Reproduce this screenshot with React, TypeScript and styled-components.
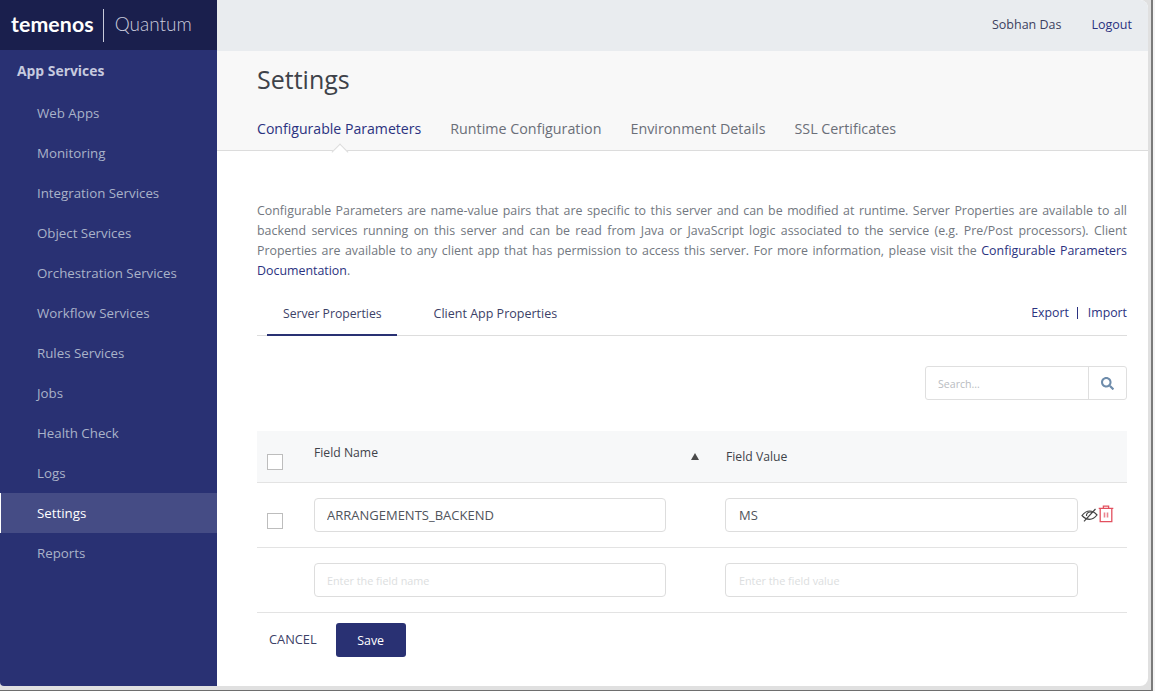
import React from "react";
import styled, { createGlobalStyle } from "styled-components";
import { FaSearch } from "react-icons/fa";

const Global = createGlobalStyle`
  html, body { margin: 0; padding: 0; background: #fff; }
  body { font-family: "Open Sans", "Noto Sans", sans-serif; overflow: hidden; }
  * { box-sizing: border-box; }
`;

const Screen = styled.div`
  width: 1155px;
  height: 691px;
  background: #f4f4f4;
  overflow: hidden;
`;
const Frame = styled.div`
  width: 1153px;
  height: 691px;
  border-right: 2px solid #7a7a7a;
  border-bottom: 1px solid #6e6e6e;
  background: #e0e0e0;
`;
const Window = styled.div`
  width: 1148px;
  height: 686px;
  display: flex;
  background: #fff;
  border-top-right-radius: 8px;
  border-bottom-right-radius: 8px;
  border-bottom-left-radius: 4px;
  overflow: hidden;
`;
const Sidebar = styled.aside`
  width: 217px;
  flex: none;
  background: #293173;
  display: flex;
  flex-direction: column;
`;
const Brand = styled.div`
  height: 50px;
  background: #1a1f4d;
  display: flex;
  align-items: center;
  padding-left: 11px;
  color: #fff;
`;
const BrandName = styled.span`
  font-family: "Lato", sans-serif;
  font-weight: 700;
  font-size: 21.3px;
  letter-spacing: 0.1px;
  margin-bottom: 3px;
`;
const BrandRule = styled.span`
  width: 1px;
  height: 33px;
  margin: 0 11px 0 9px;
  background: #c8cada;
`;
const BrandProduct = styled.span`
  font-family: "Lato", sans-serif;
  font-weight: 300;
  font-size: 19px;
  margin-bottom: 3px;
  color: #c9cbdc;
`;
const SectionTitle = styled.div`
  height: 43px;
  padding: 0 0 2px 17px;
  display: flex;
  align-items: center;
  font-size: 13.9px;
  font-weight: 700;
  color: #c6cadf;
`;
const NavList = styled.nav`
  display: flex;
  flex-direction: column;
`;
const NavItem = styled.a<{ $active?: boolean }>`
  height: 40px;
  display: flex;
  align-items: center;
  padding: 0 0 0 ${(p) => (p.$active ? "36px" : "37px")};
  font-size: 13.3px;
  color: ${(p) => (p.$active ? "#ffffff" : "#a9b3c9")};
  background: ${(p) => (p.$active ? "#454c85" : "transparent")};
  border-left: ${(p) => (p.$active ? "1px solid #fff" : "none")};
`;
const Main = styled.main`
  flex: 1;
  min-width: 0;
  display: flex;
  flex-direction: column;
`;
const TopBar = styled.header`
  height: 51px;
  background: #e9ecef;
  display: flex;
  align-items: center;
  justify-content: flex-end;
  padding: 0 16px 3px 0;
  gap: 30px;
  font-size: 12.5px;
`;
const UserName = styled.span`
  color: #3c3f5e;
`;
const LogoutLink = styled.a`
  color: #2b3280;
`;
const PageHead = styled.section`
  height: 100px;
  background: #f8f8f8;
  border-bottom: 1px solid #dcdcdc;
  padding: 12px 0 0 40px;
`;
const PageTitle = styled.h1`
  margin: 0;
  font-size: 25px;
  font-weight: 400;
  line-height: 32px;
  color: #3e4249;
`;
const TabRow = styled.div`
  display: flex;
  gap: 29px;
  margin-top: 24px;
`;
const PageTab = styled.a<{ $active?: boolean }>`
  position: relative;
  font-size: ${(p) => (p.$active ? "14.1px" : "14.3px")};
  line-height: 20px;
  color: ${(p) => (p.$active ? "#2b3280" : "#6b6f78")};
`;
const Notch = styled.span`
  position: absolute;
  left: 50%;
  top: 27px;
  width: 12px;
  height: 12px;
  margin-left: -5px;
  background: #fff;
  border-left: 1px solid #dcdcdc;
  border-top: 1px solid #dcdcdc;
  transform: rotate(45deg);
`;
const Body = styled.section`
  flex: 1;
  padding: 50px 21px 0 40px;
`;
const Intro = styled.p`
  margin: 0;
  font-size: 12.4px;
  line-height: 20px;
  text-align: justify;
  color: #727780;
`;
const DocLink = styled.a`
  color: #2b3280;
`;
const SubTabBar = styled.div`
  height: 46px;
  margin-top: 9px;
  display: flex;
  align-items: stretch;
  justify-content: space-between;
  border-bottom: 1px solid #dddddd;
`;
const SubTabs = styled.div`
  display: flex;
  margin-left: 10px;
  gap: 7px;
`;
const SubTab = styled.a<{ $active?: boolean }>`
  padding: 2px ${(p) => (p.$active ? "15px" : "30px")} 0 ${(p) => (p.$active ? "16px" : "30px")};
  display: flex;
  align-items: center;
  font-size: ${(p) => (p.$active ? "12.2px" : "12.5px")};
  color: #3c4167;
  border-bottom: 2px solid ${(p) => (p.$active ? "#293173" : "transparent")};
  margin-bottom: -1px;
`;
const Transfer = styled.div`
  display: flex;
  align-items: center;
  font-size: 12.3px;
  color: #2b3280;
`;
const TransferRule = styled.span`
  width: 1px;
  height: 12px;
  margin: 0 10px 0 8px;
  background: #2b3280;
`;
const SearchRow = styled.div`
  display: flex;
  justify-content: flex-end;
  margin-top: 30px;
`;
const SearchBox = styled.div`
  width: 202px;
  height: 34px;
  display: flex;
  border: 1px solid #dfdfdf;
  border-radius: 3px;
  background: #fff;
`;
const SearchInput = styled.input`
  width: 162px;
  border: none;
  outline: none;
  background: transparent;
  padding: 2px 12px 0;
  font: 400 10.6px "Open Sans", sans-serif;
  &::placeholder { color: #b9bcc1; opacity: 1; }
`;
const SearchButton = styled.button`
  flex: 1;
  border: none;
  border-left: 1px solid #dfdfdf;
  background: transparent;
  color: #6e8cab;
  font-size: 13px;
  display: flex;
  align-items: center;
  justify-content: center;
  padding: 0;
`;
const Table = styled.div`
  margin-top: 31px;
`;
const HeadRow = styled.div`
  height: 52px;
  display: grid;
  grid-template-columns: 57px 352px 59px 353px 49px;
  background: #f7f8f9;
  border-bottom: 1px solid #e3e3e3;
`;
const DataRow = styled.div`
  height: 65px;
  display: grid;
  grid-template-columns: 57px 352px 59px 353px 49px;
  align-items: center;
  border-bottom: 1px solid #e3e3e3;
`;
const CheckCell = styled.div<{ $top: number }>`
  padding: ${(p) => p.$top}px 0 0 10px;
  align-self: start;
`;
const Check = styled.span`
  display: block;
  width: 16px;
  height: 16px;
  border: 1px solid #bdbdbd;
  background: #fff;
`;
const HeadLabel = styled.div<{ $top: number; $inset?: number }>`
  padding: ${(p) => p.$top}px 0 0 ${(p) => p.$inset ?? 0}px;
  font-size: 12.2px;
  line-height: 16px;
  color: #3f434a;
`;
const SortCell = styled.div`
  padding: 22px 0 0 25px;
`;
const SortMark = styled.span`
  display: block;
  width: 0;
  height: 0;
  border-left: 4px solid transparent;
  border-right: 4px solid transparent;
  border-bottom: 7px solid #4a4a4a;
`;
const FieldInput = styled.input<{ $inset?: number }>`
  width: 100%;
  height: 34px;
  border: 1px solid #dddddd;
  border-radius: 4px;
  background: #fff;
  outline: none;
  padding: 0 12px 0 ${(p) => p.$inset ?? 12}px;
  font: 400 13px "Open Sans", sans-serif;
  color: #50545c;
  &::placeholder { color: #dcdee0; opacity: 1; font-size: 10.8px; }
`;
const Actions = styled.div`
  display: flex;
  align-items: center;
  padding-left: 3px;
  margin-top: -2px;
`;
const Footer = styled.div`
  display: flex;
  align-items: center;
  margin-top: 10px;
  padding-left: 12px;
  gap: 19px;
`;
const CancelButton = styled.button`
  border: none;
  background: none;
  padding: 0 0 2px;
  font: 400 12.8px "Open Sans", sans-serif;
  color: #3c4167;
`;
const SaveButton = styled.button`
  width: 70px;
  height: 34px;
  border: none;
  border-radius: 3px;
  background: #293173;
  color: #fff;
  font: 400 12.4px "Open Sans", sans-serif;
`;

const EyeOff = () => (
  <svg width="17" height="15" viewBox="0 0 17 15" fill="none" stroke="#444" strokeWidth="1.2">
    <path d="M1 8.500C3.500 5.200 6 4 8.700 4c2.600 0 5 1.300 7.300 4-2.400 3-4.800 4.300-7.400 4.300C6 12.300 3.400 11.300 1 8.500Z" />
    <path d="M5.500 9C5.200 6.500 7 5 9.200 5c.8 0 1.500.2 2 .6" />
    <path d="M3 14.300 14.500 2" />
  </svg>
);
const Trash = () => (
  <svg width="16" height="18" viewBox="0 0 16 18" fill="none" stroke="#e2505f" strokeWidth="1.300">
    <path d="M.7 3.400h14.600M5.400 3.200V1.200h5.200v2" />
    <path d="M2.200 3.800v12.800h11.600V3.800" />
    <path d="M6.500 7.500v5M9.500 7.500v5" strokeWidth="1.600" opacity="0.7" />
  </svg>
);

const navItems = ["Web Apps", "Monitoring", "Integration Services", "Object Services", "Orchestration Services", "Workflow Services", "Rules Services", "Jobs", "Health Check", "Logs", "Settings", "Reports"];
const pageTabs = ["Configurable Parameters", "Runtime Configuration", "Environment Details", "SSL Certificates"];

export default function App() {
  return (
    <Screen>
      <Global />
      <Frame>
        <Window>
          <Sidebar>
            <Brand>
              <BrandName>temenos</BrandName>
              <BrandRule />
              <BrandProduct>Quantum</BrandProduct>
            </Brand>
            <SectionTitle>App Services</SectionTitle>
            <NavList>
              {navItems.map((n) => (
                <NavItem key={n} $active={n === "Settings"}>{n}</NavItem>
              ))}
            </NavList>
          </Sidebar>
          <Main>
            <TopBar>
              <UserName>Sobhan Das</UserName>
              <LogoutLink>Logout</LogoutLink>
            </TopBar>
            <PageHead>
              <PageTitle>Settings</PageTitle>
              <TabRow>
                {pageTabs.map((t, i) => (
                  <PageTab key={t} $active={i === 0}>
                    {t}
                    {i === 0 && <Notch />}
                  </PageTab>
                ))}
              </TabRow>
            </PageHead>
            <Body>
              <Intro>
                Configurable Parameters are name-value pairs that are specific to this server and can be modified at runtime. Server Properties are available to all backend services running on this server and can be read from Java or JavaScript logic associated to the service (e.g. Pre/Post processors). Client Properties are available to any client app that has permission to access this server. For more information, please visit the <DocLink>Configurable Parameters Documentation</DocLink>.
              </Intro>
              <SubTabBar>
                <SubTabs>
                  <SubTab $active>Server Properties</SubTab>
                  <SubTab>Client App Properties</SubTab>
                </SubTabs>
                <Transfer>
                  <span>Export</span>
                  <TransferRule />
                  <span>Import</span>
                </Transfer>
              </SubTabBar>
              <SearchRow>
                <SearchBox>
                  <SearchInput placeholder="Search..." />
                  <SearchButton><FaSearch /></SearchButton>
                </SearchBox>
              </SearchRow>
              <Table>
                <HeadRow>
                  <CheckCell $top={23}><Check /></CheckCell>
                  <HeadLabel $top={14}>Field Name</HeadLabel>
                  <SortCell><SortMark /></SortCell>
                  <HeadLabel $top={18} $inset={1}>Field Value</HeadLabel>
                  <div />
                </HeadRow>
                <DataRow>
                  <CheckCell $top={30}><Check /></CheckCell>
                  <FieldInput defaultValue="ARRANGEMENTS_BACKEND" />
                  <div />
                  <FieldInput defaultValue="MS" $inset={13} />
                  <Actions><EyeOff /><Trash /></Actions>
                </DataRow>
                <DataRow>
                  <div />
                  <FieldInput placeholder="Enter the field name" />
                  <div />
                  <FieldInput placeholder="Enter the field value" $inset={13} />
                  <div />
                </DataRow>
              </Table>
              <Footer>
                <CancelButton>CANCEL</CancelButton>
                <SaveButton>Save</SaveButton>
              </Footer>
            </Body>
          </Main>
        </Window>
      </Frame>
    </Screen>
  );
}
